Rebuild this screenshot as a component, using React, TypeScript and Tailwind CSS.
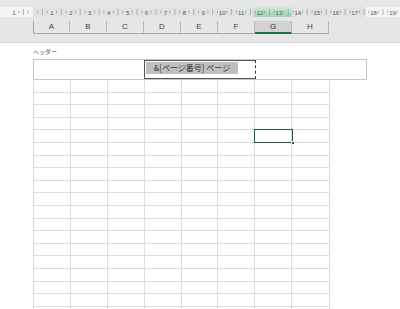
const cols = ["A", "B", "C", "D", "E", "F", "G", "H"];
const rows = Array.from({ length: 19 });

function Ruler() {
  const nums = Array.from({ length: 20 }, (_, i) => i);
  return (
    <svg width="400" height="10" className="block">
      <rect x="0" y="0" width="400" height="10" fill="#e2e2e2" />
      <rect x="0" y="0" width="33" height="10" fill="#f4f4f4" />
      <rect x="366" y="0" width="34" height="10" fill="#f4f4f4" />
      <defs>
        <linearGradient id="g" x1="0" y1="0" x2="0" y2="1">
          <stop offset="0" stopColor="#cfe9d9" />
          <stop offset="1" stopColor="#9fd3b4" />
        </linearGradient>
      </defs>
      <rect x="254" y="0" width="38" height="10" fill="url(#g)" />
      {Array.from({ length: 84 }, (_, i) => {
        const x = 14 + i * 4.73;
        const major = i % 4 === 0;
        const half = i % 4 === 2;
        if (major) return null;
        return (
          <line
            key={i}
            x1={x}
            x2={x}
            y1={half ? 2 : 3.5}
            y2={half ? 8 : 6.5}
            stroke="#8a8a8a"
            strokeWidth="0.6"
          />
        );
      })}
      {nums.map((n) => {
        if (n === 0) return null;
        const x = 33 + n * 18.92;
        return (
          <text
            key={n}
            x={x}
            y="7.5"
            fontSize="6"
            fill="#555"
            textAnchor="middle"
            fontFamily="Liberation Sans, sans-serif"
          >
            {n}
          </text>
        );
      })}
      <text x="14" y="7.5" fontSize="6" fill="#555" textAnchor="middle" fontFamily="Liberation Sans, sans-serif">
        1
      </text>
    </svg>
  );
}

export default function App() {
  return (
    <div className="w-[400px] h-[309px] overflow-hidden bg-white" style={{ fontFamily: '"Liberation Sans", "Noto Sans CJK JP", sans-serif' }}>
      <div className="h-[43px] bg-[#e6e6e6] pt-[7px] border-b border-[#d4d4d4]">
        <Ruler />
        <div className="flex pl-[33px] mt-[4px]">
          {cols.map((c) => (
            <div
              key={c}
              className={
                c === "G"
                  ? "w-[37px] h-[13px] flex items-center justify-center text-[8px] text-[#333] bg-[#d2d2d2] border-b-2 border-[#217346] border-r border-r-[#b8b8b8]"
                  : "w-[37px] h-[13px] flex items-center justify-center text-[8px] text-[#444] border-b border-[#a8a8a8] border-r border-r-[#b8b8b8] first:border-l first:border-l-[#a8a8a8]"
              }
            >
              {c}
            </div>
          ))}
        </div>
      </div>

      <div className="pl-[33px]">
        <div className="h-[16px] pt-[6px] text-[6px] leading-none text-[#555]" style={{ fontFamily: '"Noto Sans CJK JP", sans-serif' }}>
          ヘッダー
        </div>
        <div className="w-[334px] h-[21px] flex border border-[#c6c6c6]">
          <div className="w-[110px]" />
          <div className="w-[112px] border border-[#555] border-r-[#333] pl-px pt-px" style={{ borderRightStyle: "dashed" }}>
            <div className="w-[92px] h-[12px] bg-[#bfbfbf] text-[8px] leading-[12px] text-[#333] text-center" style={{ fontFamily: '"Noto Sans CJK JP", sans-serif' }}>
              &amp;[ページ番号] ページ
            </div>
          </div>
          <div className="flex-1" />
        </div>

        <div className="w-[297px] border-l border-r border-[#d9d9d9]">
          {rows.map((_, r) => (
            <div key={r} className="flex h-[12.6px] border-b border-[#dcdcdc]">
              {cols.map((c, ci) => (
                <div
                  key={c}
                  className={
                    "relative w-[37px] h-full " + (ci < 7 ? "border-r border-[#dcdcdc]" : "")
                  }
                >
                  {r === 4 && c === "G" && (
                    <div className="absolute -left-px -top-px w-[39px] h-[14px] border-[1.5px] border-[#1e5c34]">
                      <div className="absolute -right-[3px] -bottom-[3px] w-[4px] h-[4px] bg-[#1e5c34] border border-white" />
                    </div>
                  )}
                </div>
              ))}
            </div>
          ))}
        </div>
      </div>
    </div>
  );
}
